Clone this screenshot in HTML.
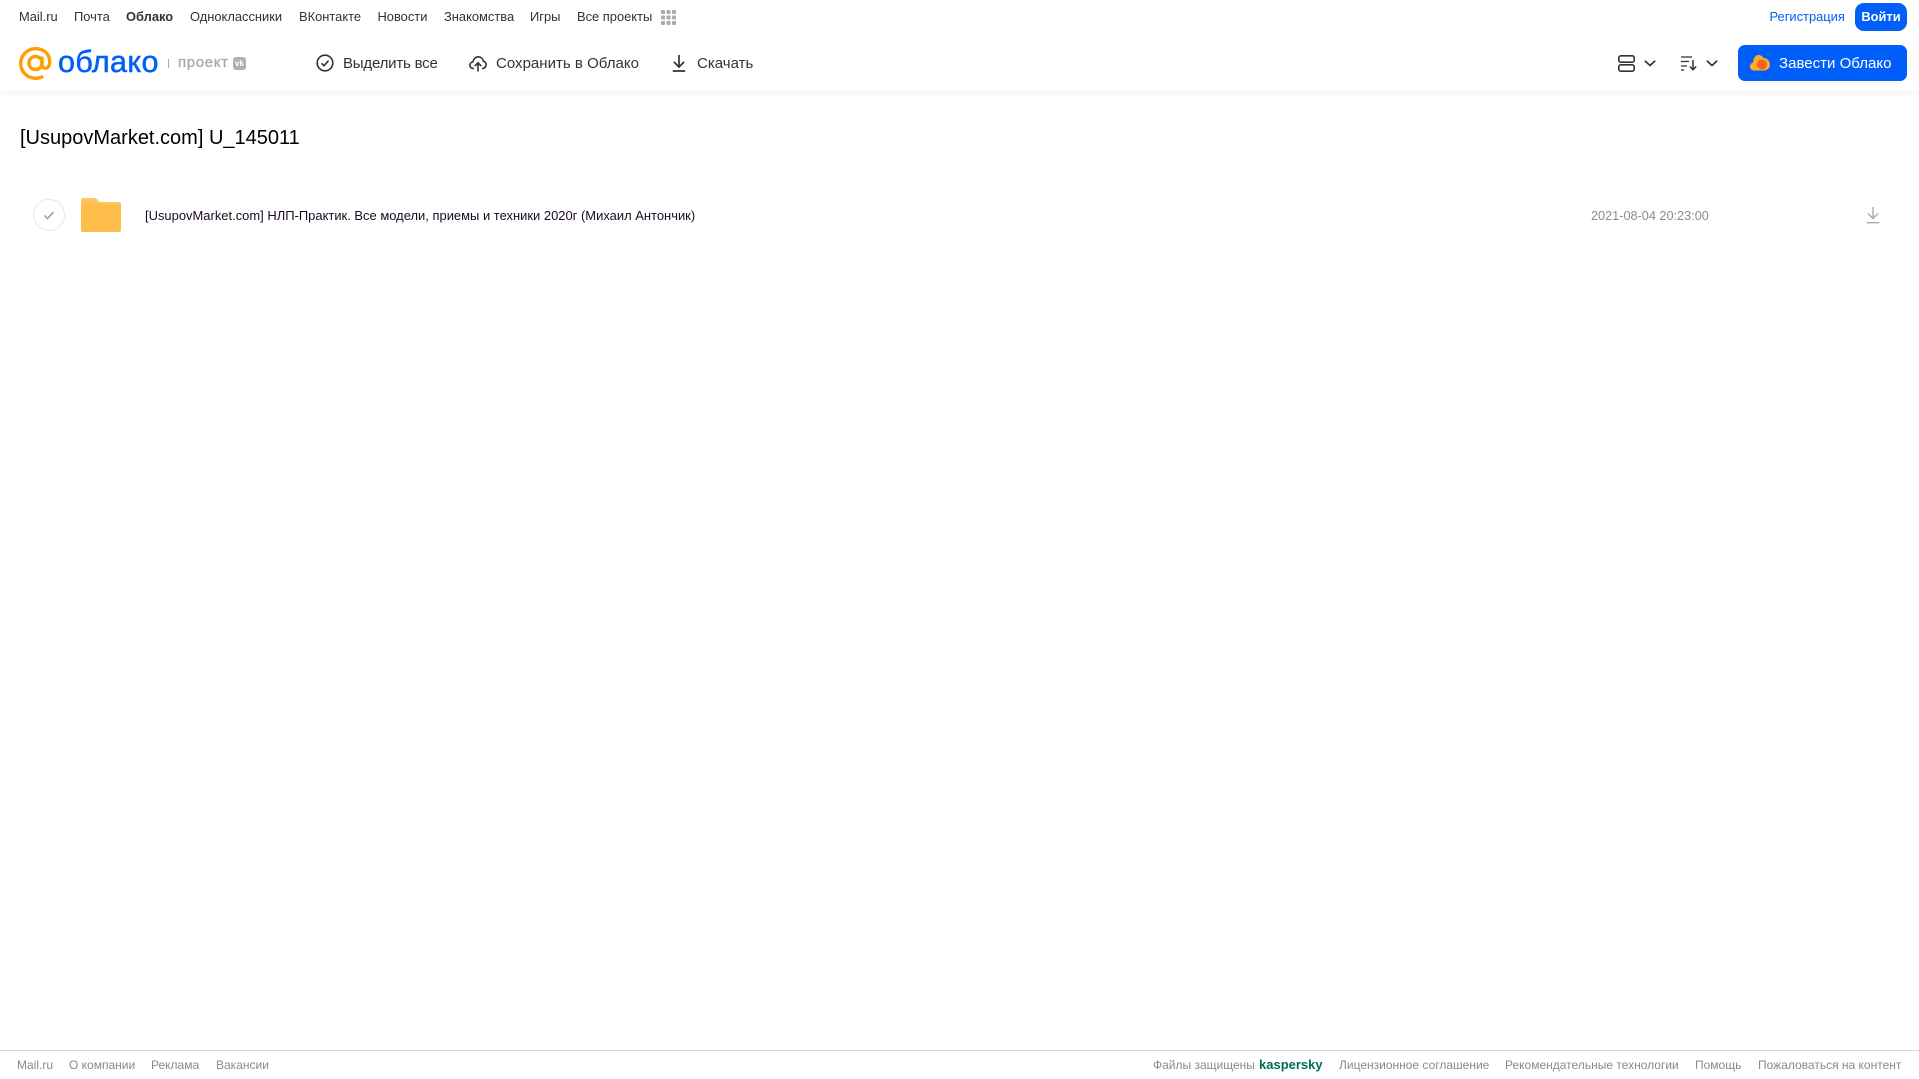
<!DOCTYPE html>
<html lang="ru"><head><meta charset="utf-8"><title>Облако</title>
<style>
html,body{margin:0;padding:0;background:#fff;width:1919px;height:1079px;overflow:hidden}
body{font-family:"Liberation Sans",sans-serif;position:relative}
.t{position:absolute;white-space:nowrap;line-height:20px}
.n{font-size:12.9px;top:7px;color:#333}
.b{font-size:15px;top:54px;color:#333;letter-spacing:.02px;line-height:20px}
.f{font-size:12px;top:1055px;color:#8a8a8a}
svg{position:absolute;overflow:visible}
#hdr{position:absolute;left:0;top:0;width:1919px;height:91px;background:#fff;box-shadow:0 2px 8px rgba(0,0,0,.06)}
</style></head><body>
<div id="hdr"></div>
<div class="t n" style="left:19px">Mail.ru</div>
<div class="t n" style="left:74px">Почта</div>
<div class="t n" style="left:126px;font-weight:bold">Облако</div>
<div class="t n" style="left:190px">Одноклассники</div>
<div class="t n" style="left:299px">ВКонтакте</div>
<div class="t n" style="left:377.5px">Новости</div>
<div class="t n" style="left:444px">Знакомства</div>
<div class="t n" style="left:530px">Игры</div>
<div class="t n" style="left:577px">Все проекты</div>
<svg style="left:661px;top:10px" width="15" height="15" fill="#aaa"><rect width="4" height="4" rx="1"/><rect x="5.5" width="4" height="4" rx="1"/><rect x="11" width="4" height="4" rx="1"/><rect y="5.5" width="4" height="4" rx="1"/><rect x="5.5" y="5.5" width="4" height="4" rx="1"/><rect x="11" y="5.5" width="4" height="4" rx="1"/><rect y="11" width="4" height="4" rx="1"/><rect x="5.5" y="11" width="4" height="4" rx="1"/><rect x="11" y="11" width="4" height="4" rx="1"/></svg>
<div class="t n" style="left:1769.5px;color:#005ff9">Регистрация</div>
<div style="position:absolute;left:1855px;top:3px;width:52px;height:28px;background:#005ff9;border-radius:9px;color:#fff;font-size:12.9px;font-weight:bold;line-height:28px;text-align:center">Войти</div>

<svg style="left:19px;top:47px" width="33" height="33" viewBox="0 0 33 33" fill="none" stroke="#ff9e00" stroke-width="3.4"><circle cx="16.5" cy="16" r="6.6"/><path d="M23 9.5V18c0 4.5 7 4.5 7.6-1.500C31.500 7 25 1.700 16.500 1.700 8.300 1.700 1.700 8.300 1.700 16.500s6.600 14.800 14.800 14.800c3 0 5.500-.7 7.700-2"/></svg>
<div class="t" style="left:58px;top:42px;font-size:30.500px;line-height:40px;color:#005ff9;letter-spacing:.4px;-webkit-text-stroke:.5px #005ff9">облако</div>
<div style="position:absolute;left:168px;top:59px;width:1px;height:9px;background:#aaa"></div>
<div class="t" style="left:178px;top:53px;font-size:15px;color:#a8a8a8;letter-spacing:.65px;-webkit-text-stroke:.35px #a8a8a8">проект</div>
<div style="position:absolute;left:233px;top:57px;width:13px;height:13px;background:#b0b0b0;border-radius:3px;color:#fff;font-size:8px;font-weight:bold;line-height:13px;text-align:center">vk</div>

<svg style="left:316px;top:54px" width="18" height="18" viewBox="0 0 18 18" fill="none" stroke="#333" stroke-width="1.600"><circle cx="9" cy="9" r="7.800"/><path d="M5.500 9.300l2.500 2.400 4.500-5"/></svg>
<div class="t b" style="left:343px;letter-spacing:-.2px">Выделить все</div>
<svg style="left:469px;top:54px" width="18" height="18" viewBox="0 0 18 18" fill="none" stroke="#333" stroke-width="1.600"><path d="M5 14.500H4.200C2.300 14.500 .9 13 .9 11.200c0-1.700 1.300-3.100 3-3.300C4.400 5 6.500 2.800 9.300 2.800c2.600 0 4.700 1.900 5.100 4.400 1.500.3 2.700 1.700 2.700 3.400 0 2-1.500 3.900-3.600 3.900H13"/><path d="M9 17.500V9M5.800 12L9 8.800l3.200 3.200"/></svg>
<div class="t b" style="left:496px">Сохранить в Облако</div>
<svg style="left:672px;top:54px" width="14" height="18" viewBox="0 0 14 18" fill="none" stroke="#333" stroke-width="1.700"><path d="M7 1v11.500M1.800 7.800L7 13l5.200-5.200M.8 17h12.400"/></svg>
<div class="t b" style="left:697px">Скачать</div>

<svg style="left:1618px;top:55px" width="17" height="17" viewBox="0 0 17 17" fill="none" stroke="#333" stroke-width="1.600"><rect x=".8" y=".8" width="15.400" height="6.400" rx="2"/><rect x=".8" y="9.800" width="15.400" height="6.400" rx="2"/></svg>
<svg style="left:1644px;top:60px" width="12" height="7" fill="none" stroke="#333" stroke-width="1.700"><path d="M.8.800L6 5.500 11.200.800"/></svg>
<svg style="left:1681px;top:56px" width="16" height="15" viewBox="0 0 16 15" fill="none" stroke="#333" stroke-width="1.300"><path d="M0 1h11M0 5.500h8M0 10h6M0 14h3"/><path d="M12 4v9.500M8.800 10.500L12 13.700l3.200-3.200" stroke-width="1.500"/></svg>
<svg style="left:1706px;top:60px" width="12" height="7" fill="none" stroke="#333" stroke-width="1.700"><path d="M.8.800L6 5.500 11.200.800"/></svg>
<div style="position:absolute;left:1738px;top:45px;width:169px;height:36px;background:#005ff9;border-radius:7px"></div>
<svg style="left:1750px;top:54px" width="20" height="17" viewBox="0 0 20 17"><path d="M4 16.500C1.700 16.500 0 14.800 0 12.500c0-2 1.300-3.500 3-4C3.300 4 5.500 1 8.500 1c2.200 0 4 1.200 5 3 3.300 0 6.500 3 6.500 6.500 0 3.500-2.700 6-6 6z" fill="#ffa930"/><circle cx="12" cy="10.500" r="5" fill="#f2641f"/></svg>
<div class="t b" style="left:1779px;color:#fff">Завести Облако</div>

<div class="t" style="left:20px;top:126px;font-size:20px;line-height:24px;color:#000">[UsupovMarket.com] U_145011</div>

<svg style="left:33px;top:199px" width="32" height="32" fill="none"><circle cx="16" cy="16" r="15.500" stroke="#e8e8e8"/><path d="M11.500 16.500l3 3 6-6.500" stroke="#999" stroke-width="1.500"/></svg>
<svg style="left:81px;top:198px" width="40" height="34" viewBox="0 0 40 34"><path d="M2 0h11c2 0 3 1 4 2.500.6 1 1.500 1.500 3 1.500h18c1.100 0 2 .9 2 2v26c0 1.100-.9 2-2 2H2c-1.100 0-2-.9-2-2V2C0 .9.900 0 2 0z" fill="#ffc45a"/><path d="M0 8c0-1.100.9-2 2-2h36c1.100 0 2 .9 2 2v24c0 1.100-.9 2-2 2H2c-1.100 0-2-.9-2-2z" fill="#ffbd4a"/></svg>
<div class="t" style="left:145px;top:205.500px;font-size:12.960px;color:#1c0a24">[UsupovMarket.com] НЛП-Практик. Все модели, приемы и техники 2020г (Михаил Антончик)</div>
<div class="t" style="left:1591px;top:205.500px;font-size:12.700px;color:#8c8c8c">2021-08-04 20:23:00</div>
<svg style="left:1866px;top:206px" width="14" height="18" viewBox="0 0 14 18" fill="none" stroke="#aaa" stroke-width="1.400"><path d="M7 1v11M2 7.500L7 12.500l5-5M.8 16.700h12.400"/></svg>

<div style="position:absolute;left:0;top:1050px;width:1919px;height:1px;background:#d8d8d8"></div>
<div class="t f" style="left:17px">Mail.ru</div>
<div class="t f" style="left:69px">О компании</div>
<div class="t f" style="left:151px">Реклама</div>
<div class="t f" style="left:216px">Вакансии</div>
<div class="t f" style="left:1153px">Файлы защищены</div>
<div class="t f" style="left:1259px;font-size:13px;font-weight:bold;color:#006d5c">kaspersky</div>
<div class="t f" style="left:1339px">Лицензионное соглашение</div>
<div class="t f" style="left:1505px">Рекомендательные технологии</div>
<div class="t f" style="left:1695px">Помощь</div>
<div class="t f" style="left:1758px">Пожаловаться на контент</div>
</body></html>
